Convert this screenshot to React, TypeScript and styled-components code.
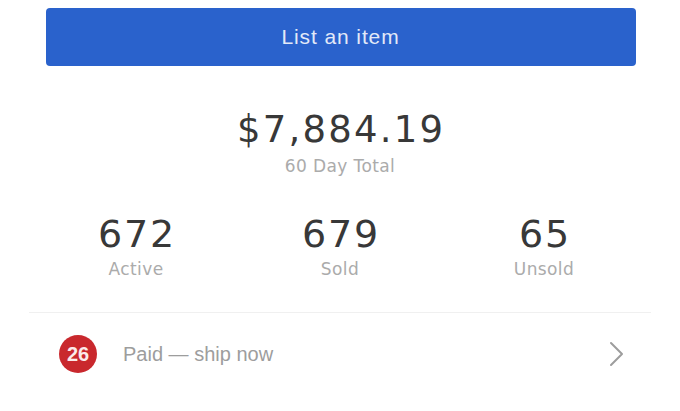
import React from 'react';
import styled, { createGlobalStyle } from 'styled-components';

const GlobalStyle = createGlobalStyle`
  html, body {
    margin: 0;
    padding: 0;
    background: #ffffff;
    font-family: "Liberation Sans", Arial, sans-serif;
  }
`;

const Page = styled.div`
  width: 680px;
  height: 411px;
  display: flex;
  flex-direction: column;
  align-items: center;
  padding-top: 8px;
  box-sizing: border-box;
  overflow: hidden;
`;

const ListButton = styled.button`
  width: 590px;
  height: 58px;
  margin-left: 1px;
  border: none;
  border-radius: 4px;
  background: #2a62cc;
  color: #e2e9f8;
  font-family: inherit;
  font-size: 21px;
  letter-spacing: 0.9px;
  cursor: pointer;
`;

const Total = styled.div`
  margin-top: 42px;
  display: flex;
  flex-direction: column;
  align-items: center;
`;

const Amount = styled.div`
  font-family: "DejaVu Sans", sans-serif;
  font-size: 37px;
  line-height: 44px;
  letter-spacing: 2.2px;
  margin-right: -2.2px;
  color: #383838;
`;

const Caption = styled.div<{ $gap?: number }>`
  font-family: "DejaVu Sans", sans-serif;
  font-size: 17px;
  line-height: 20px;
  letter-spacing: 0.4px;
  color: #ababab;
  margin-top: ${(p) => p.$gap ?? 0}px;
`;

const Stats = styled.div`
  width: 612px;
  margin-top: 36px;
  display: grid;
  grid-template-columns: repeat(3, 1fr);
`;

const Stat = styled.div`
  display: flex;
  flex-direction: column;
  align-items: center;
`;

const StatValue = styled.div`
  font-family: "DejaVu Sans", sans-serif;
  font-size: 38px;
  line-height: 44px;
  letter-spacing: 1.8px;
  margin-right: -1.8px;
  color: #383838;
`;

const Divider = styled.div`
  width: 622px;
  height: 1px;
  background: #f0f0f0;
  margin-top: 33px;
`;

const Row = styled.div`
  width: 562px;
  height: 82px;
  display: flex;
  align-items: center;
`;

const Badge = styled.div`
  width: 38px;
  height: 38px;
  border-radius: 50%;
  background: #c9282d;
  color: #fbeaea;
  font-size: 20px;
  font-weight: bold;
  display: flex;
  align-items: center;
  justify-content: center;
`;

const RowLabel = styled.div`
  margin-left: 26px;
  flex: 1;
  font-size: 20px;
  color: #9d9d9d;
`;

const Chevron = styled.svg`
  width: 18px;
  height: 26px;
  margin-right: -4px;
`;

const stats = [
  { value: '672', label: 'Active' },
  { value: '679', label: 'Sold' },
  { value: '65', label: 'Unsold' },
];

export default function App() {
  return (
    <>
      <GlobalStyle />
      <Page>
        <ListButton>List an item</ListButton>
        <Total>
          <Amount>$7,884.19</Amount>
          <Caption $gap={4}>60 Day Total</Caption>
        </Total>
        <Stats>
          {stats.map((s) => (
            <Stat key={s.label}>
              <StatValue>{s.value}</StatValue>
              <Caption $gap={3}>{s.label}</Caption>
            </Stat>
          ))}
        </Stats>
        <Divider />
        <Row>
          <Badge>26</Badge>
          <RowLabel>Paid — ship now</RowLabel>
          <Chevron viewBox="0 0 18 26">
            <path d="M4 2 L15 13 L4 24" fill="none" stroke="#9d9d9d" strokeWidth="2" strokeLinecap="round" strokeLinejoin="round" />
          </Chevron>
        </Row>
      </Page>
    </>
  );
}
